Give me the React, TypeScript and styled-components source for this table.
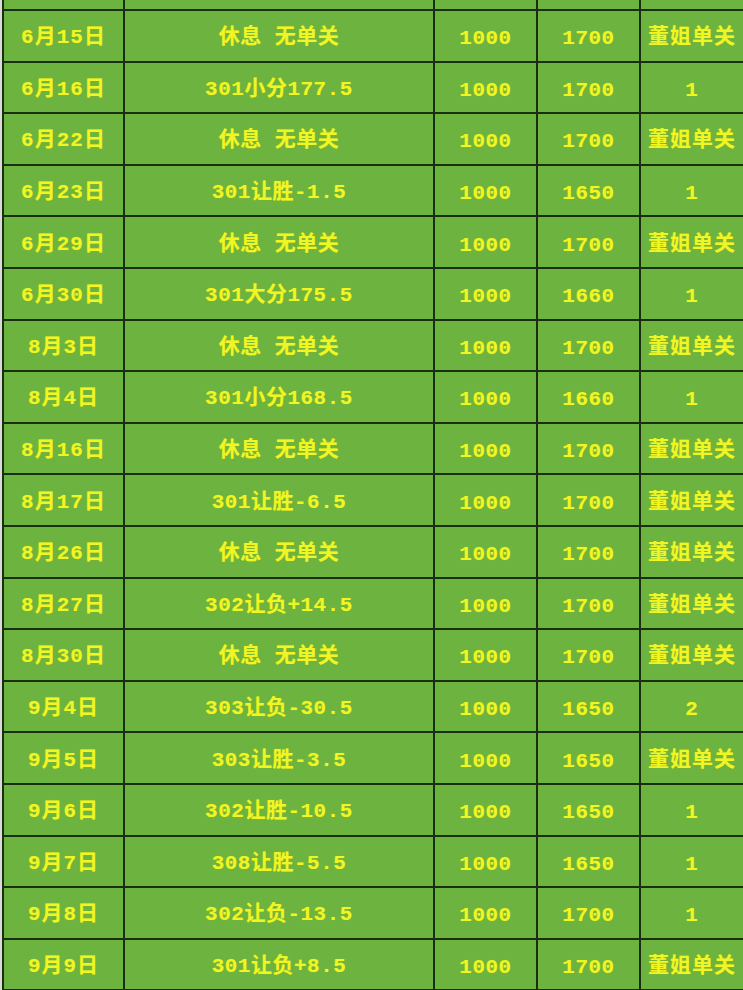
import styled, { createGlobalStyle } from 'styled-components';

const GlobalStyle = createGlobalStyle`
  html, body {
    margin: 0;
    padding: 0;
    background: #d8dcd4;
    overflow: hidden;
  }
`;

type Row = [string, string, string, string, string];

const rows: Row[] = [
  ['6月15日', '休息 无单关', '1000', '1700', '董姐单关'],
  ['6月16日', '301小分177.5', '1000', '1700', '1'],
  ['6月22日', '休息 无单关', '1000', '1700', '董姐单关'],
  ['6月23日', '301让胜-1.5', '1000', '1650', '1'],
  ['6月29日', '休息 无单关', '1000', '1700', '董姐单关'],
  ['6月30日', '301大分175.5', '1000', '1660', '1'],
  ['8月3日', '休息 无单关', '1000', '1700', '董姐单关'],
  ['8月4日', '301小分168.5', '1000', '1660', '1'],
  ['8月16日', '休息 无单关', '1000', '1700', '董姐单关'],
  ['8月17日', '301让胜-6.5', '1000', '1700', '董姐单关'],
  ['8月26日', '休息 无单关', '1000', '1700', '董姐单关'],
  ['8月27日', '302让负+14.5', '1000', '1700', '董姐单关'],
  ['8月30日', '休息 无单关', '1000', '1700', '董姐单关'],
  ['9月4日', '303让负-30.5', '1000', '1650', '2'],
  ['9月5日', '303让胜-3.5', '1000', '1650', '董姐单关'],
  ['9月6日', '302让胜-10.5', '1000', '1650', '1'],
  ['9月7日', '308让胜-5.5', '1000', '1650', '1'],
  ['9月8日', '302让负-13.5', '1000', '1700', '1'],
  ['9月9日', '301让负+8.5', '1000', '1700', '董姐单关'],
];

const isNumeric = (s: string) => /^[0-9.+-]+$/.test(s);

const Styled = {
  Table: styled.div`
    display: grid;
    grid-template-columns: 121px 310px 103px 103px 104px;
    margin-left: 2px;
    border-left: 2px solid #1c2e12;
    background: #6db33f;
  `,
  Stub: styled.div`
    height: 9px;
    box-sizing: content-box;
    border-right: 2px solid #1c2e12;
    border-bottom: 2px solid #1c2e12;
  `,
  Cell: styled.div<{ $wide?: boolean; $num?: boolean }>`
    box-sizing: border-box;
    height: 51.6px;
    padding-top: ${(p) => (p.$num ? '6px' : '4px')};
    border-right: 2px solid #1c2e12;
    border-bottom: 2px solid #1c2e12;
    display: flex;
    align-items: center;
    justify-content: center;
    white-space: pre;
    color: #f0f524;
    font-family: 'Liberation Mono', 'Noto Sans CJK SC', monospace;
    font-weight: 700;
    font-size: 21px;
    line-height: 1;
    letter-spacing: ${(p) => (p.$wide ? '1px' : '0.5px')};
    text-shadow: 0 0 1px rgba(200, 210, 20, 0.7);
  `,
};

export default function App() {
  return (
    <>
      <GlobalStyle />
      <Styled.Table>
        {[0, 1, 2, 3, 4].map((i) => (
          <Styled.Stub key={`s${i}`} />
        ))}
        {rows.map((row, r) =>
          row.map((text, c) => (
            <Styled.Cell
              key={`${r}-${c}`}
              $wide={c === 4 || c === 0}
              $num={isNumeric(text)}
            >
              {text}
            </Styled.Cell>
          )),
        )}
      </Styled.Table>
    </>
  );
}
